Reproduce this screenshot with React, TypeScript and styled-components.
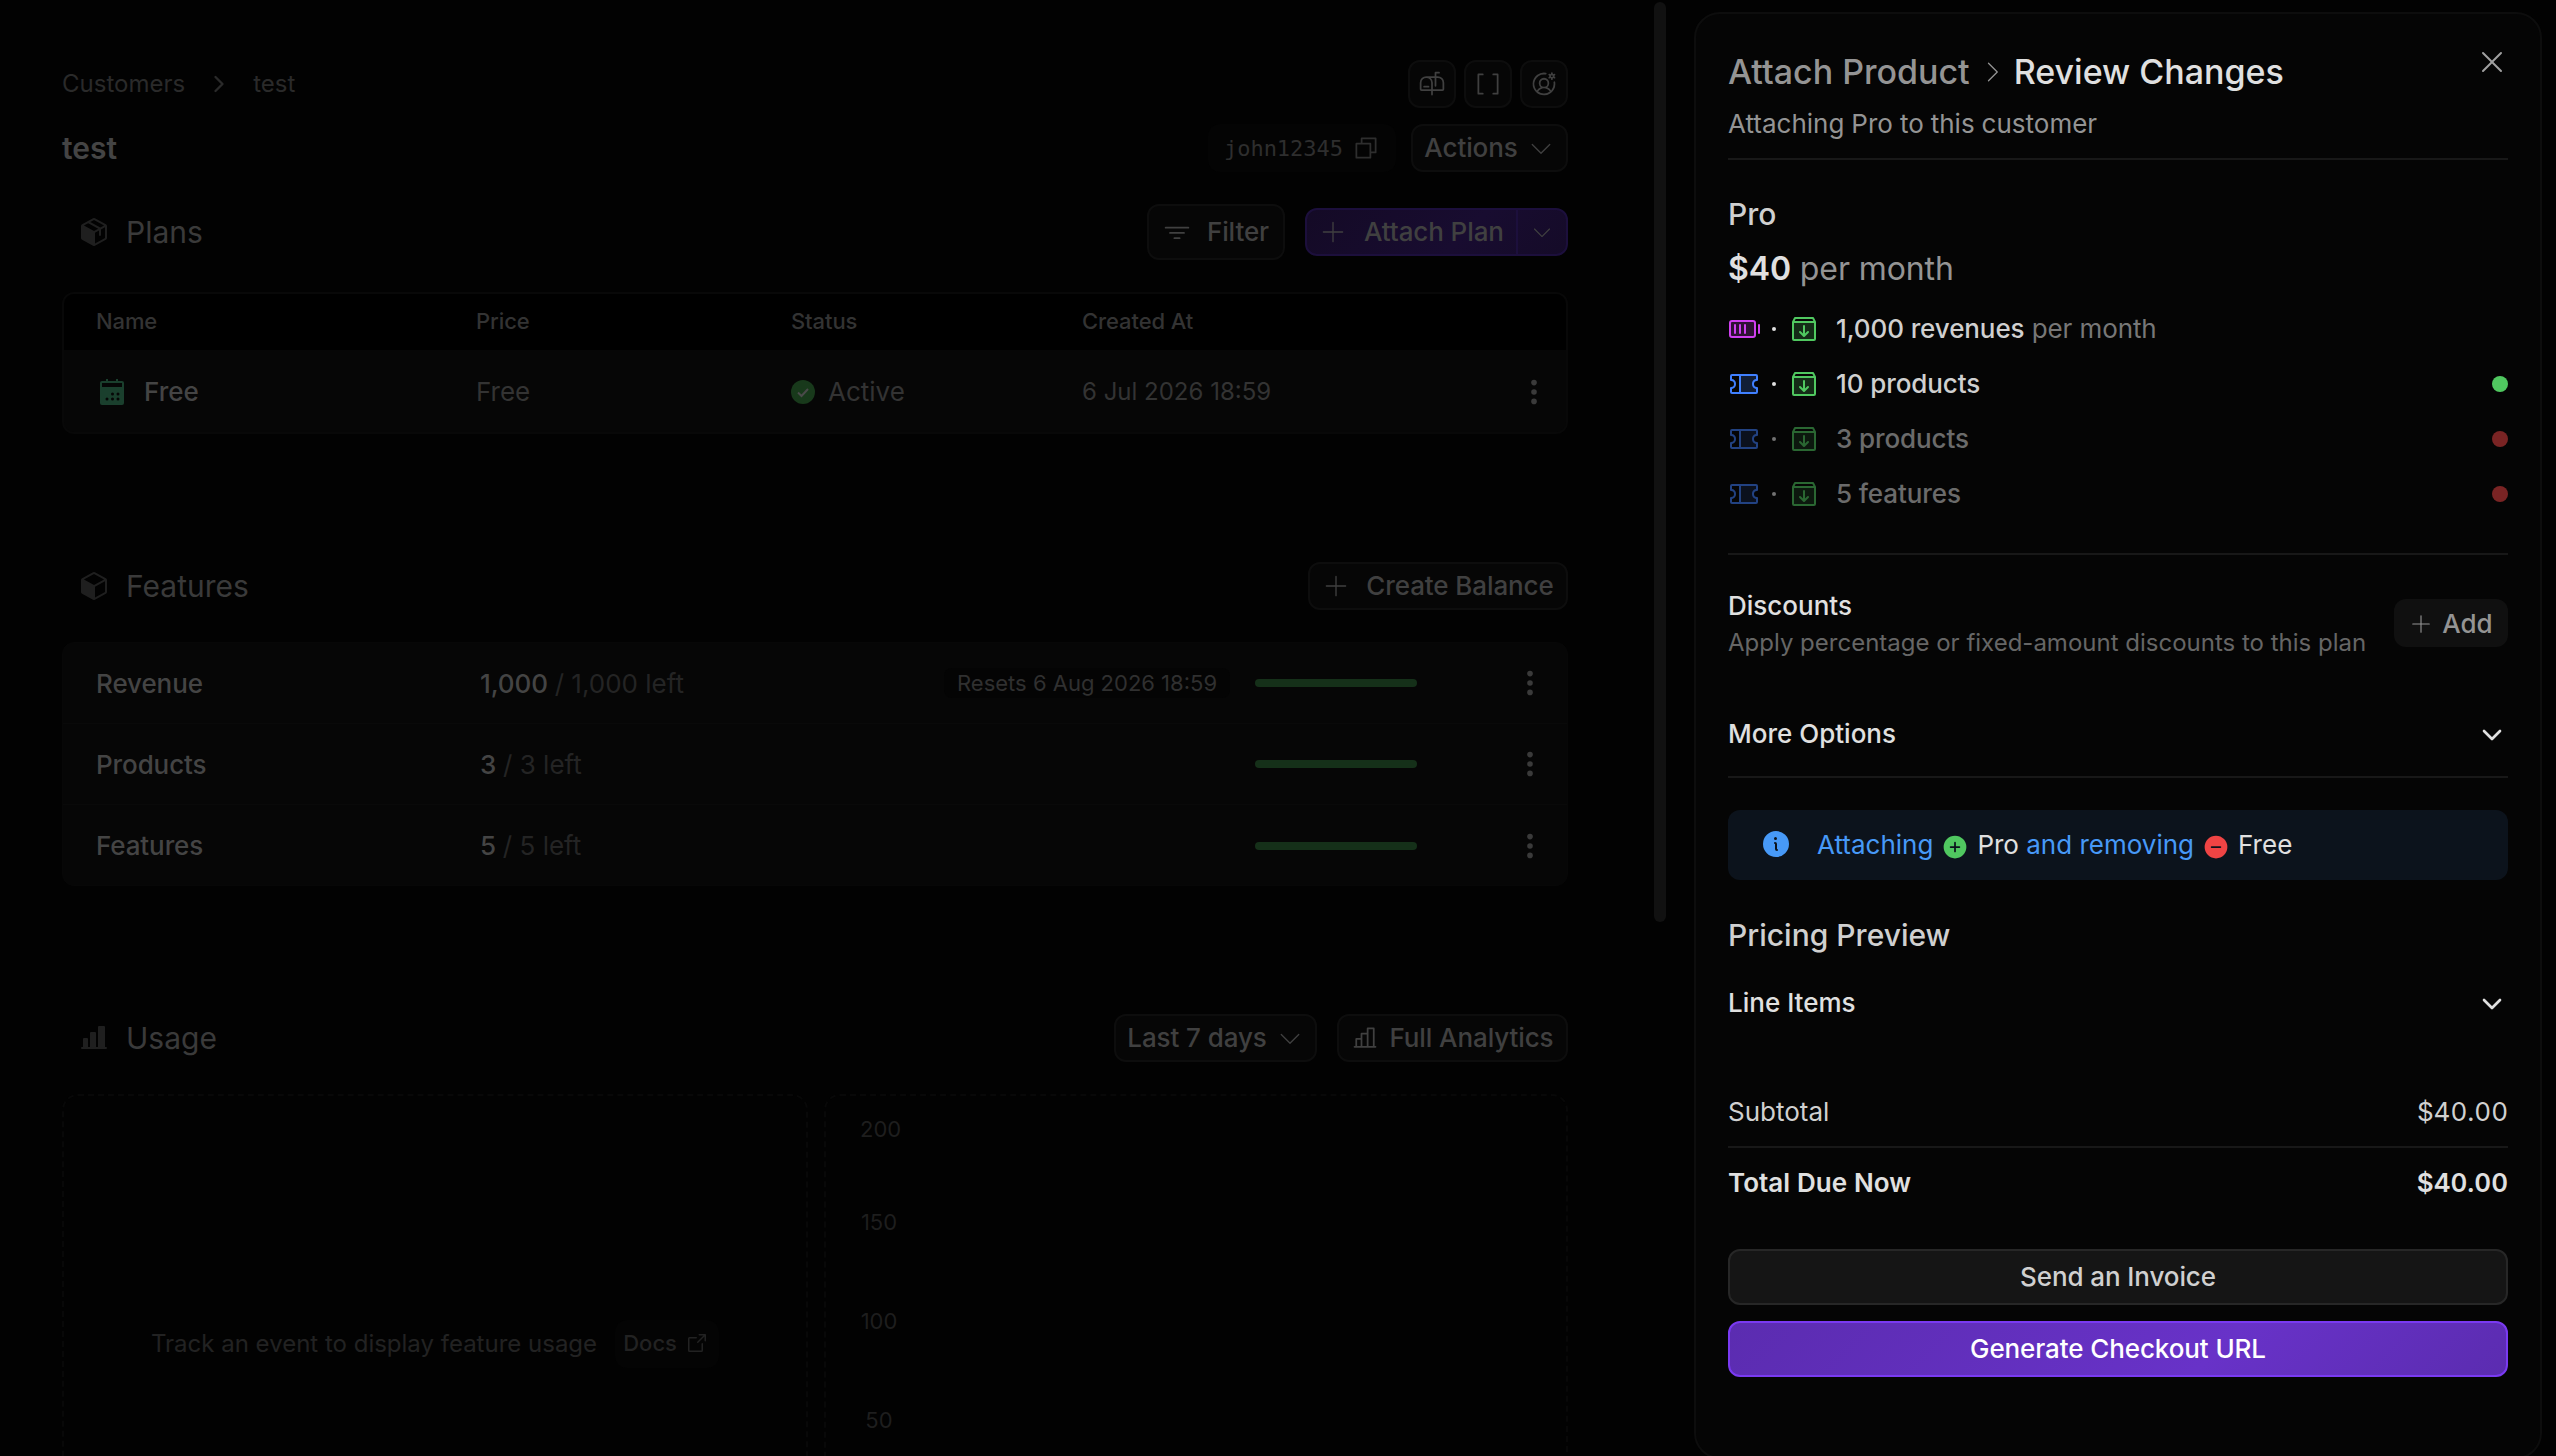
import styled, { createGlobalStyle } from "styled-components"
import { ChevronDown, ChevronRight } from "lucide-react"
import {
  PiArrowSquareOut,
  PiBatteryHighDuotone,
  PiBoxArrowDownDuotone,
  PiBracketsSquare,
  PiCaretDownLight,
  PiCaretRightLight,
  PiChartBar,
  PiChartBarFill,
  PiCopy,
  PiCubeFill,
  PiFunnelSimple,
  PiInfoFill,
  PiMailbox,
  PiMinusCircleFill,
  PiPackageFill,
  PiPlusCircleFill,
  PiPlusLight,
  PiTicketDuotone,
  PiUserCircleGear,
  PiX,
} from "react-icons/pi"

const GlobalStyle = createGlobalStyle`
  * {
    box-sizing: border-box;
  }
  body {
    margin: 0;
    background: #020202;
    color: #e0e0e0;
    font-family: Inter, "Liberation Sans", sans-serif;
    font-size: 26px;
    overflow: hidden;
  }
  svg {
    display: block;
    flex: none;
  }
`

const Page = styled.div`
  display: flex;
  align-items: flex-start;
  width: 2556px;
  height: 1456px;
  overflow: hidden;
`

/* ---------- customer page ---------- */

const Main = styled.main`
  display: flex;
  flex-direction: column;
  flex: none;
  width: 1654px;
  height: 1456px;
  padding: 60px 86px 0 62px;
  overflow: hidden;
  color: #404040;
  font-weight: 500;
`

const Scrollbar = styled.div`
  flex: none;
  width: 12px;
  height: 920px;
  margin: 2px 28px 0 0;
  border-radius: 6px;
  background: #111111;
`

const Bar = styled.div<{ $top?: number; $height?: number }>`
  display: flex;
  align-items: center;
  justify-content: space-between;
  flex: none;
  height: ${(p) => p.$height ?? 48}px;
  margin-top: ${(p) => p.$top ?? 0}px;
`

const Group = styled.div<{ $gap: number }>`
  display: flex;
  align-items: center;
  gap: ${(p) => p.$gap}px;
`

/* keeps a label optically centred beside an icon */
const Label = styled.span`
  padding-bottom: 2px;
`

const Breadcrumb = styled.nav`
  display: flex;
  align-items: center;
  gap: 20px;
  font-size: 24px;
  font-weight: 400;
  color: #2a2a2a;
`

const PageTitle = styled.h1`
  margin: 0;
  font-size: 30px;
  font-weight: 600;
  color: #444444;
`

const Button = styled.button<{ $width: number; $height?: number; $gap?: number }>`
  display: flex;
  align-items: center;
  justify-content: center;
  gap: ${(p) => p.$gap ?? 12}px;
  width: ${(p) => p.$width}px;
  height: ${(p) => p.$height ?? 48}px;
  padding: 0;
  border: 2px solid #0d0d0d;
  border-radius: 12px;
  background: #060606;
  color: #404040;
  font: inherit;
  letter-spacing: -0.1px;
  white-space: nowrap;
`

const IdChip = styled.div`
  display: flex;
  align-items: center;
  justify-content: center;
  gap: 9px;
  width: 188px;
  height: 48px;
  border-radius: 12px;
  background: #040404;
  color: #2e2e2e;
  font-family: "DejaVu Sans Mono", monospace;
  font-size: 22px;
  font-weight: 400;
`

const SplitButton = styled.div`
  display: flex;
  width: 263px;
  height: 48px;
  border: 2px solid #1c0f3c;
  border-radius: 12px;
  background: linear-gradient(135deg, #140a26, #180c30 60%, #150b28);
  color: #404040;
`

const SplitMain = styled.div`
  display: flex;
  align-items: center;
  gap: 17px;
  width: 211px;
  padding-left: 12px;
  border-right: 2px solid #1c0f3c;
  letter-spacing: -0.1px;
  white-space: nowrap;
`

const SplitCaret = styled.div`
  display: flex;
  flex: 1;
  align-items: center;
  justify-content: center;
  padding-right: 1px;
`

const SectionTitle = styled.h2`
  display: flex;
  align-items: center;
  gap: 16px;
  margin: 0;
  padding-left: 16px;
  font-size: 30px;
  font-weight: 400;
  color: #3a3a3a;

  & svg {
    color: #1f1f1f;
  }
`

const PlansTable = styled.div`
  flex: none;
  height: 142px;
  margin-top: 32px;
  border: 2px solid #080808;
  border-radius: 12px;
  background: #060606;
  overflow: hidden;
`

const PlansRow = styled.div<{ $head?: boolean }>`
  display: grid;
  grid-template-columns: 380px 315px 291px 1fr 35px;
  align-items: center;
  height: ${(p) => (p.$head ? 56 : 84)}px;
  padding: 0 0 ${(p) => (p.$head ? 2 : 0)}px 32px;
  background: ${(p) => (p.$head ? "#000000" : "transparent")};
  color: #333333;
  font-size: ${(p) => (p.$head ? 22 : 24)}px;
  letter-spacing: ${(p) => (p.$head ? "-0.1px" : "normal")};
`

const PlanName = styled.div`
  display: flex;
  align-items: center;
  gap: 19px;
  padding-left: 3px;
  font-size: 26px;
  color: #444444;
`

const PlanText = styled.div`
  padding-bottom: 2px;
  font-size: 26px;
  font-weight: 400;
`

const Created = styled.div`
  padding-bottom: 2px;
  font-size: 24px;
  font-weight: 400;
`

const Status = styled.div`
  display: flex;
  align-items: center;
  gap: 13px;
  font-size: 26px;
  font-weight: 400;
`

const BalanceTable = styled.div`
  flex: none;
  height: 244px;
  margin-top: 32px;
  border: 1px solid #070707;
  border-radius: 12px;
  background: #060606;
`

const BalanceRow = styled.div`
  display: grid;
  grid-template-columns: 384px 1fr 311px 162px 110px 40px;
  align-items: center;
  height: 81px;
  padding-left: 33px;
  color: #444444;
  letter-spacing: -0.1px;

  &:not(:last-child) {
    border-bottom: 1px solid #090909;
  }
`

const Left = styled.span`
  color: #242424;
  font-weight: 400;
  letter-spacing: 0;
`

const Resets = styled.span`
  padding: 2px 13px;
  border-radius: 8px;
  background: #040404;
  color: #303030;
  font-size: 22px;
  font-weight: 400;
  letter-spacing: 0;
  white-space: nowrap;
`

const ResetsCell = styled.span`
  padding-bottom: 3px;
`

const Meter = styled.div`
  height: 8px;
  border-radius: 4px;
  background: #153019;
`

const UsageCards = styled.div`
  display: grid;
  grid-template-columns: 746px 744px;
  gap: 16px;
  flex: none;
  height: 500px;
  margin-top: 32px;
`

const UsageCard = styled.div`
  border: 2px dashed #080808;
  border-radius: 16px;
`

const EmptyUsage = styled(UsageCard)`
  display: flex;
  align-items: center;
  justify-content: center;
  gap: 18px;
  color: #222222;
  font-size: 24px;
  font-weight: 400;
`

const DocsLink = styled.a`
  display: flex;
  align-items: center;
  justify-content: center;
  gap: 8px;
  width: 104px;
  height: 48px;
  padding: 0 2px 2px 0;
  border-radius: 12px;
  background: #040404;
  font-size: 22px;
  font-weight: 500;
`

const Axis = styled(UsageCard)`
  padding: 16px 0 0 34px;
  color: #1e1e1e;
  font-size: 22px;
  font-weight: 400;
`

const Tick = styled.div<{ $height: number }>`
  width: 38px;
  height: ${(p) => p.$height}px;
  line-height: 35px;
  text-align: center;
`

/* ---------- review sheet ---------- */

const Sheet = styled.aside`
  display: flex;
  flex-direction: column;
  flex: none;
  width: 848px;
  height: 1447px;
  margin-top: 12px;
  padding: 34px 32px 0;
  border: 2px solid #0d0d0d;
  border-radius: 26px;
  background: #050505;
`

const SheetHeader = styled.header`
  display: flex;
  align-items: center;
  flex: none;
  height: 48px;
  gap: 8px;
  font-size: 34px;
  font-weight: 500;
  color: #e0e0e0;
  white-space: nowrap;
`

const Muted = styled.span<{ $color?: string; $weight?: number }>`
  color: ${(p) => p.$color ?? "#949494"};
  font-weight: ${(p) => p.$weight ?? 500};
`

const CloseButton = styled.button`
  display: flex;
  align-self: flex-start;
  margin: -2px 0 0 auto;
  padding: 0;
  border: 0;
  background: none;
  color: #a0a0a0;
`

const Line = styled.div<{
  $top: number
  $height?: number
  $size?: number
  $weight?: number
  $color?: string
}>`
  display: flex;
  align-items: center;
  justify-content: space-between;
  flex: none;
  height: ${(p) => p.$height ?? 40}px;
  margin-top: ${(p) => p.$top}px;
  padding-bottom: ${(p) => (p.$size ? 0 : 2)}px;
  font-size: ${(p) => p.$size ?? 26}px;
  font-weight: ${(p) => p.$weight ?? 400};
  font-variant-numeric: tabular-nums;
  color: ${(p) => p.$color ?? "#e0e0e0"};
  white-space: nowrap;

  & svg {
    margin-top: 3px;
  }
`

const Divider = styled.hr<{ $top: number }>`
  flex: none;
  width: 100%;
  height: 2px;
  margin: ${(p) => p.$top}px 0 0;
  border: 0;
  background: #181818;
`

const Price = styled.div`
  flex: none;
  height: 44px;
  margin-top: 13px;
  font-size: 32px;
  line-height: 44px;
  letter-spacing: -0.1px;
  color: #949494;

  & strong {
    font-weight: 600;
    color: #e0e0e0;
  }
`

const ItemList = styled.ul`
  display: flex;
  flex-direction: column;
  flex: none;
  gap: 23px;
  margin: 22px 0 0;
  padding: 0;
  list-style: none;
`

const Item = styled.li<{ $removed?: boolean }>`
  display: flex;
  align-items: center;
  height: 32px;
  font-weight: 500;
  letter-spacing: -0.1px;
  color: #d0d0d0;

  & > * {
    opacity: ${(p) => (p.$removed ? 0.5 : 1)};
  }
`

const Separator = styled.i`
  width: 4px;
  height: 4px;
  margin: 0 12px;
  border-radius: 50%;
  background: #e0e0e0;
`

const ItemText = styled.span`
  margin-left: 16px;
  padding-bottom: 2px;
`

const Dot = styled.i<{ $color: string }>`
  width: 16px;
  height: 16px;
  margin-left: auto;
  border-radius: 50%;
  background: ${(p) => p.$color};
`

const Discounts = styled.div`
  display: flex;
  justify-content: space-between;
  flex: none;
  height: 72px;
  margin-top: 33px;
  line-height: 36px;
  font-weight: 500;
`

const Hint = styled.div`
  font-size: 24px;
  font-weight: 400;
  color: #666666;
  line-height: 37px;
`

const AddButton = styled.button`
  display: flex;
  align-items: center;
  justify-content: center;
  gap: 9px;
  width: 114px;
  height: 48px;
  margin-top: 11px;
  padding: 1px 0 0;
  border: 0;
  border-radius: 12px;
  background: #101010;
  color: #949494;
  font: inherit;
`

const Banner = styled.div`
  display: flex;
  align-items: center;
  flex: none;
  height: 70px;
  margin-top: 32px;
  padding: 0 32px 2px;
  border-radius: 12px;
  background: #0c131c;
  color: #4799f7;
  white-space: pre;
`

const BannerText = styled.span`
  margin-left: 25px;
`

const BannerIcon = styled.span<{ $color: string }>`
  margin: 5px 8px 0;
  color: ${(p) => p.$color};
`

const PlanLabel = styled.span`
  color: #e0e0e0;
`

const Actions = styled.div`
  display: flex;
  flex-direction: column;
  flex: none;
  gap: 16px;
  margin-top: 46px;
`

const ActionButton = styled.button<{ $primary?: boolean }>`
  height: 56px;
  padding: 0 0 2px;
  border: 2px solid ${(p) => (p.$primary ? "#7a3af2" : "#272727")};
  border-radius: 12px;
  background: ${(p) =>
    p.$primary ? "linear-gradient(135deg, #5b2cb0, #6832c8 62%, #5b2cb0)" : "#151515"};
  background-origin: border-box;
  color: ${(p) => (p.$primary ? "#ffffff" : "#d0d0d0")};
  font: inherit;
  font-weight: 500;
  letter-spacing: -0.1px;
`

function CalendarIcon() {
  return (
    <svg width='26' height='28' viewBox='0 0 26 28' fill='none'>
      <path d='M8 1v4M18 1v4' stroke='#1a3f2d' strokeWidth='2' />
      <path
        fillRule='evenodd'
        d='M3 3h20a2 2 0 0 1 2 2v20a2 2 0 0 1-2 2H3a2 2 0 0 1-2-2V5a2 2 0 0 1 2-2Zm0 2v4h20V5Z'
        fill='#1a3f2d'
      />
      <g fill='#060606'>
        <circle cx='13.5' cy='16' r='1.5' />
        <circle cx='19' cy='16' r='1.5' />
        <circle cx='8' cy='21' r='1.5' />
        <circle cx='13.5' cy='21' r='1.5' />
        <circle cx='19' cy='21' r='1.5' />
      </g>
    </svg>
  )
}

function CheckIcon() {
  return (
    <svg width='24' height='24' viewBox='0 0 24 24' fill='none'>
      <circle cx='12' cy='12' r='12' fill='#18391b' />
      <path d='M7 12.5l3.5 3.5L17 9' stroke='#4a4a4a' strokeWidth='2' />
    </svg>
  )
}

function Kebab() {
  return (
    <svg width='6' height='26' viewBox='0 0 6 26' fill='#3a3a3a'>
      <circle cx='3' cy='3.6' r='2.8' />
      <circle cx='3' cy='13' r='2.8' />
      <circle cx='3' cy='22.4' r='2.8' />
    </svg>
  )
}

const balances = [
  { name: "Revenue", value: "1,000", resets: "Resets 6 Aug 2026 18:59" },
  { name: "Products", value: "3" },
  { name: "Features", value: "5" },
]

const items = [
  { text: "1,000 revenues", interval: "per month", metered: true },
  { text: "10 products", dot: "#50c860" },
  { text: "3 products", dot: "#ef4444", removed: true },
  { text: "5 features", dot: "#ef4444", removed: true },
]

const ticks = [
  { label: "200", height: 93 },
  { label: "150", height: 99 },
  { label: "100", height: 99 },
  { label: "50", height: 36 },
]

function CustomerPage() {
  return (
    <Main>
      <Bar>
        <Breadcrumb>
          <Label>Customers</Label>
          <ChevronRight size={28} />
          <Label>test</Label>
        </Breadcrumb>
        <Group $gap={8}>
          <Button $width={48}>
            <PiMailbox size={28} />
          </Button>
          <Button $width={48}>
            <PiBracketsSquare size={28} />
          </Button>
          <Button $width={48}>
            <PiUserCircleGear size={28} />
          </Button>
        </Group>
      </Bar>
      <Bar $top={16}>
        <PageTitle>test</PageTitle>
        <Group $gap={15}>
          <IdChip>
            john12345
            <PiCopy size={28} />
          </IdChip>
          <Button $width={157} $gap={9}>
            <Label>Actions</Label>
            <PiCaretDownLight size={28} />
          </Button>
        </Group>
      </Bar>

      <Bar $top={32} $height={56}>
        <SectionTitle>
          <PiPackageFill size={32} />
          Plans
        </SectionTitle>
        <Group $gap={20}>
          <Button $width={138} $height={56} $gap={16}>
            <PiFunnelSimple size={28} />
            <Label>Filter</Label>
          </Button>
          <SplitButton>
            <SplitMain>
              <PiPlusLight size={28} />
              <Label>Attach Plan</Label>
            </SplitMain>
            <SplitCaret>
              <PiCaretDownLight size={24} />
            </SplitCaret>
          </SplitButton>
        </Group>
      </Bar>
      <PlansTable>
        <PlansRow $head>
          <span>Name</span>
          <span>Price</span>
          <span>Status</span>
          <span>Created At</span>
        </PlansRow>
        <PlansRow>
          <PlanName>
            <CalendarIcon />
            <Label>Free</Label>
          </PlanName>
          <PlanText>Free</PlanText>
          <Status>
            <CheckIcon />
            <Label>Active</Label>
          </Status>
          <Created>6 Jul 2026 18:59</Created>
          <Kebab />
        </PlansRow>
      </PlansTable>

      <Bar $top={128}>
        <SectionTitle>
          <PiCubeFill size={32} />
          Features
        </SectionTitle>
        <Button $width={260} $gap={16}>
          <PiPlusLight size={28} />
          <Label>Create Balance</Label>
        </Button>
      </Bar>
      <BalanceTable>
        {balances.map((b) => (
          <BalanceRow key={b.name}>
            <span>{b.name}</span>
            <span>
              {b.value} <Left>/ {b.value} left</Left>
            </span>
            <ResetsCell>{b.resets && <Resets>{b.resets}</Resets>}</ResetsCell>
            <Meter />
            <span />
            <Kebab />
          </BalanceRow>
        ))}
      </BalanceTable>

      <Bar $top={128}>
        <SectionTitle>
          <PiChartBarFill size={32} />
          Usage
        </SectionTitle>
        <Group $gap={20}>
          <Button $width={203} $gap={9}>
            <Label>Last 7 days</Label>
            <PiCaretDownLight size={28} />
          </Button>
          <Button $width={231} $gap={10}>
            <PiChartBar size={28} />
            <Label>Full Analytics</Label>
          </Button>
        </Group>
      </Bar>
      <UsageCards>
        <EmptyUsage>
          <Label>Track an event to display feature usage</Label>
          <DocsLink>
            Docs
            <PiArrowSquareOut size={24} />
          </DocsLink>
        </EmptyUsage>
        <Axis>
          {ticks.map((t) => (
            <Tick key={t.label} $height={t.height}>
              {t.label}
            </Tick>
          ))}
        </Axis>
      </UsageCards>
    </Main>
  )
}

function ReviewSheet() {
  return (
    <Sheet>
      <SheetHeader>
        <Label>
          <Muted>Attach Product</Muted>
        </Label>
        <PiCaretRightLight size={28} color='#949494' />
        <Label>Review Changes</Label>
        <CloseButton>
          <PiX size={32} />
        </CloseButton>
      </SheetHeader>
      <Line $top={8} $color='#949494'>
        Attaching Pro to this customer
      </Line>
      <Divider $top={14} />

      <Line $top={34} $size={30} $weight={500} $color='#d0d0d0'>
        Pro
      </Line>
      <Price>
        <strong>$40</strong> per month
      </Price>
      <ItemList>
        {items.map((item) => (
          <Item key={item.text} $removed={item.removed}>
            {item.metered ? (
              <PiBatteryHighDuotone size={32} color='#d03ff0' />
            ) : (
              <PiTicketDuotone size={32} color='#4080ff' />
            )}
            <Separator />
            <PiBoxArrowDownDuotone size={32} color='#50c860' />
            <ItemText>
              {item.text}
              {item.interval && (
                <Muted $color='#777777' $weight={400}>
                  {" "}
                  {item.interval}
                </Muted>
              )}
            </ItemText>
            {item.dot && <Dot $color={item.dot} />}
          </Item>
        ))}
      </ItemList>
      <Divider $top={43} />

      <Discounts>
        <div>
          Discounts
          <Hint>Apply percentage or fixed-amount discounts to this plan</Hint>
        </div>
        <AddButton>
          <PiPlusLight size={24} />
          Add
        </AddButton>
      </Discounts>
      <Line $top={50} $height={48} $weight={500}>
        More Options
        <ChevronDown size={32} />
      </Line>
      <Divider $top={18} />

      <Banner>
        <PiInfoFill size={32} />
        <BannerText>Attaching</BannerText>
        <BannerIcon $color='#50c860'>
          <PiPlusCircleFill size={28} />
        </BannerIcon>
        <PlanLabel>Pro</PlanLabel>
        <span> and removing</span>
        <BannerIcon $color='#ef4444'>
          <PiMinusCircleFill size={28} />
        </BannerIcon>
        <PlanLabel>Free</PlanLabel>
      </Banner>

      <Line $top={35} $size={30} $weight={500} $color='#d0d0d0'>
        Pricing Preview
      </Line>
      <Line $top={24} $height={48} $weight={500}>
        Line Items
        <ChevronDown size={32} />
      </Line>
      <Line $top={65} $color='#d0d0d0'>
        <span>Subtotal</span>
        <span>$40.00</span>
      </Line>
      <Divider $top={14} />
      <Line $top={15} $weight={600}>
        <span>Total Due Now</span>
        <span>$40.00</span>
      </Line>
      <Actions>
        <ActionButton>Send an Invoice</ActionButton>
        <ActionButton $primary>Generate Checkout URL</ActionButton>
      </Actions>
    </Sheet>
  )
}

export default function App() {
  return (
    <>
      <GlobalStyle />
      <Page>
        <CustomerPage />
        <Scrollbar />
        <ReviewSheet />
      </Page>
    </>
  )
}
